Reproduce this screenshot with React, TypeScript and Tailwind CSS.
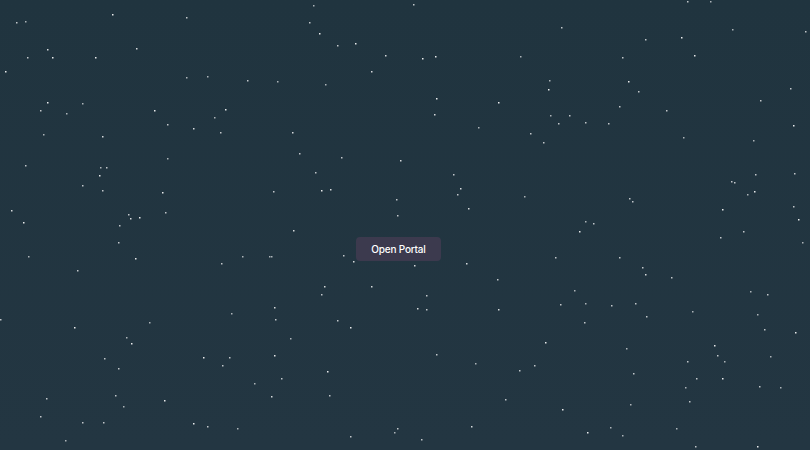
import React from 'react';

// star positions traced from the reference: [x, y, brightness]
const stars: [number, number, number][] = [
  [112, 14, 1], [186, 17, 0.8], [16, 22, 0.8], [25, 21, 0.7], [47, 49, 0.9], [27, 57, 0.8], [52, 57, 1],
  [95, 57, 1], [136, 48, 0.9], [5, 71, 1], [186, 77, 0.7], [207, 76, 0.7], [247, 80, 0.8], [47, 102, 1],
  [40, 110, 0.8], [82, 103, 0.7], [66, 113, 0.7], [154, 110, 1], [225, 109, 1], [214, 117, 0.7],
  [167, 124, 0.8], [193, 128, 0.9], [43, 134, 0.7], [220, 132, 0.8], [102, 136, 0.9],
  [313, 5, 0.7], [413, 4, 0.8], [309, 22, 0.8], [319, 33, 1], [337, 45, 0.8], [355, 43, 1], [385, 55, 0.9],
  [422, 58, 1], [435, 56, 1], [520, 56, 0.7], [371, 71, 0.9], [277, 81, 0.7], [325, 84, 0.7], [436, 98, 1],
  [498, 102, 1], [434, 114, 0.9], [478, 127, 0.7], [530, 133, 0.8], [292, 132, 0.9],
  [687, 1, 0.8], [710, 1, 0.7], [561, 27, 0.8], [732, 29, 0.7], [805, 31, 0.8], [645, 39, 0.8], [681, 37, 1],
  [694, 55, 1], [622, 57, 0.8], [549, 80, 0.7], [548, 89, 1], [628, 81, 1], [638, 91, 0.8], [790, 88, 0.8],
  [760, 100, 0.8], [619, 106, 0.8], [666, 110, 0.8], [550, 115, 0.7], [569, 115, 0.8], [558, 123, 0.8],
  [585, 122, 0.8], [608, 123, 0.8], [793, 125, 1], [683, 137, 0.7], [753, 140, 0.7], [543, 142, 0.8],
  [25, 165, 0.8], [100, 167, 0.7], [106, 167, 0.8], [167, 158, 0.7], [99, 175, 1], [82, 185, 0.8],
  [102, 190, 0.8], [162, 192, 1], [11, 210, 0.9], [23, 222, 1], [128, 214, 0.8], [130, 218, 0.9],
  [139, 217, 1], [165, 212, 0.8], [119, 225, 0.8], [118, 242, 0.8], [28, 256, 0.7], [135, 258, 1],
  [77, 270, 0.8], [242, 256, 0.7], [221, 263, 0.8], [269, 256, 0.7],
  [299, 153, 0.8], [341, 157, 0.8], [400, 160, 0.9], [315, 172, 0.8], [453, 174, 0.8], [273, 191, 0.8],
  [321, 190, 1], [330, 189, 0.9], [460, 188, 0.9], [457, 194, 0.8], [396, 199, 0.8], [524, 196, 0.7],
  [468, 208, 0.9], [397, 215, 0.8], [293, 230, 0.9], [271, 256, 0.7], [343, 255, 0.8], [353, 261, 0.9],
  [414, 265, 0.9], [466, 263, 0.9], [497, 279, 0.8], [324, 286, 0.9], [371, 286, 0.9], [321, 294, 0.8],
  [426, 295, 0.8],
  [755, 174, 0.8], [794, 173, 0.8], [731, 181, 0.8], [734, 182, 0.8], [754, 191, 1], [747, 194, 0.7],
  [629, 198, 0.8], [632, 201, 0.8], [793, 206, 0.8], [722, 209, 1], [798, 219, 1], [585, 221, 0.7],
  [593, 223, 0.8], [579, 231, 1], [743, 231, 0.8], [720, 237, 0.8], [802, 242, 0.7], [555, 257, 0.8],
  [619, 257, 0.8], [642, 267, 0.8], [645, 274, 0.9], [671, 277, 0.8], [574, 290, 0.7], [750, 291, 0.7],
  [767, 294, 0.8],
  [0, 319, 0.8], [74, 327, 1], [149, 322, 0.7], [231, 313, 0.7], [126, 337, 0.7], [131, 343, 1],
  [104, 358, 0.8], [118, 368, 0.8], [203, 357, 1], [229, 357, 0.8], [222, 365, 0.8], [254, 383, 0.7],
  [46, 398, 0.8], [115, 395, 0.8], [164, 400, 1], [123, 406, 0.7], [40, 416, 0.8], [82, 422, 0.8],
  [103, 422, 0.8], [193, 423, 1], [207, 426, 0.8], [237, 428, 0.7], [65, 440, 0.7],
  [274, 307, 0.9], [417, 308, 0.9], [426, 309, 0.8], [498, 309, 0.9], [275, 319, 0.8], [337, 320, 0.8],
  [350, 327, 1], [290, 338, 0.7], [274, 355, 1], [436, 354, 0.8], [475, 363, 0.7], [534, 365, 0.8],
  [327, 371, 1], [519, 370, 0.8], [281, 378, 0.8], [271, 396, 0.9], [329, 395, 0.8], [505, 399, 0.8],
  [471, 426, 0.9], [397, 428, 0.8], [394, 432, 0.7], [350, 436, 0.8], [421, 439, 0.8],
  [560, 304, 0.8], [585, 303, 0.7], [611, 305, 0.8], [635, 303, 0.8], [646, 316, 0.8], [692, 311, 0.7],
  [757, 314, 0.7], [584, 322, 0.8], [764, 329, 0.8], [795, 332, 1], [545, 342, 1], [626, 348, 0.7],
  [714, 345, 1], [717, 355, 0.8], [770, 356, 0.7], [687, 361, 0.8], [724, 361, 0.7], [633, 373, 0.8],
  [696, 378, 0.8], [722, 378, 1], [685, 387, 0.7], [759, 386, 0.8], [780, 387, 0.7], [689, 401, 0.8],
  [630, 404, 0.7], [562, 409, 1], [610, 427, 0.7], [587, 432, 1], [676, 428, 0.7], [622, 435, 0.7],
  [695, 446, 0.8], [757, 446, 1],
];

const Starfield = () => (
  <svg className="absolute inset-0 h-full w-full" viewBox="0 0 810 450" preserveAspectRatio="none">
    {stars.map(([x, y, b], i) => (
      <rect key={i} x={x} y={y} width={1.5} height={1.5} fill="#ffffff" opacity={b * 0.9} />
    ))}
  </svg>
);

export default function App() {
  return (
    <div className="relative h-[450px] w-full overflow-hidden bg-gradient-to-b from-[#20343f] to-[#233642]">
      <Starfield />
      <div className="relative flex h-full items-center justify-center pt-[48px] pr-[13px]">
        <button
          type="button"
          className="flex h-6 w-[85px] items-center justify-center rounded-[4px] bg-[#3c3a4e] text-[10px] font-medium tracking-[-0.2px] text-white"
          style={{ fontFamily: 'Inter, "Noto Sans", sans-serif' }}
        >
          Open Portal
        </button>
      </div>
    </div>
  );
}
